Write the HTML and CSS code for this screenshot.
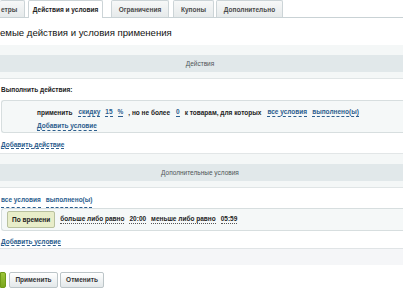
FILE: index.html
```html
<!DOCTYPE html>
<html lang="ru">
<head>
<meta charset="utf-8">
<link rel="stylesheet" href="styles.css">
</head>
<body>
<div class="tabs">
  <div class="tab first">етры</div>
  <div class="tab active">Действия и условия</div>
  <div class="tab">Ограничения</div>
  <div class="tab">Купоны</div>
  <div class="tab">Дополнительно</div>
</div>
<div class="content">
  <div class="title">емые действия и условия применения</div>
  <div class="section-head"><div class="band">Действия</div></div>
  <div class="label">Выполнить действия:</div>
  <div class="box box-actions">
    <div class="row">
      <span class="word">применить</span>
      <span class="lnk">скидку</span>
      <span class="lnk">15</span>
      <span class="lnk">%</span>
      <span class="word">, но не более</span>
      <span class="lnk">0</span>
      <span class="word">к товарам, для которых</span>
      <span class="lnk">все условия</span>
      <span class="lnk">выполнено(ы)</span>
    </div>
    <div class="row"><span class="lnk">Добавить условие</span></div>
  </div>
  <div class="add-action"><span class="lnk">Добавить действие</span></div>
  <div class="section-head second"><div class="band">Дополнительные условия</div></div>
  <div class="cond-top"><span class="lnk">все условия</span><span class="lnk">выполнено(ы)</span></div>
  <div class="box box-cond">
    <span class="tag">По времени</span>
    <span class="dash">больше либо равно</span>
    <span class="dash">20:00</span>
    <span class="dash">меньше либо равно</span>
    <span class="dash">05:59</span>
  </div>
  <div class="add-cond"><span class="lnk">Добавить условие</span></div>
  <div class="footer-band"></div>
  <div class="buttons">
    <span class="btn green"></span>
    <span class="btn">Применить</span>
    <span class="btn">Отменить</span>
  </div>
  <div class="bottom"></div>
</div>
</body>
</html>
```

FILE: styles.css
```css
html, body {
  margin: 0;
  padding: 0;
  background: #fff;
  overflow: hidden;
}
body {
  width: 403px;
  height: 294px;
  font-family: "Liberation Sans", Arial, sans-serif;
  font-size: 6.5px;
  color: #222;
}
.tabs {
  display: flex;
  align-items: flex-end;
  height: 17px;
  border-bottom: 1px solid #c9d2d5;
  background: #fff;
  white-space: nowrap;
}
.tab {
  height: 17px;
  box-sizing: border-box;
  padding: 0 8px;
  margin-right: 4px;
  display: flex;
  align-items: center;
  justify-content: center;
  font-weight: bold;
  color: #4a4a4a;
  background: linear-gradient(#f7f8f8, #e6eaeb);
  border: 1px solid #ccd4d7;
  border-bottom: none;
  border-radius: 2px 2px 0 0;
}
.tab.first {
  padding: 0 0 0 1px;
  justify-content: flex-start;
  border-left: none;
  width: 25px;
  margin-right: 3px;
}
.tab.active {
  background: #fff;
  color: #222;
  width: 75px;
  margin-right: 8px;
  height: 18px;
  margin-bottom: -1px;
}
.tab:nth-child(3) { width: 58px; }
.tab:nth-child(4) { width: 41px; margin-right: 2px; }
.tab:nth-child(5) { width: 67px; }
.title {
  font-size: 9.6px;
  color: #111;
  height: 27px;
  line-height: 30px;
  white-space: nowrap;
}
.section-head {
  background: #f4f7f7;
  padding: 10px 0 6px;
  border-bottom: 1px solid #e0e5e6;
}
.section-head .band {
  background: #e1e8ea;
  height: 17px;
  line-height: 17px;
  text-align: center;
  color: #4f5557;
  padding-right: 3px;
}
.label {
  font-weight: bold;
  padding: 7px 0 0 1px;
  height: 14px;
  line-height: 8px;
  color: #222;
}
.box {
  background: #f5f8f8;
  border: 1px solid #d7dedf;
  border-right: none;
  border-radius: 3px 0 0 3px;
  margin-left: 1px;
  white-space: nowrap;
}
.box-actions {
  height: 33px;
  padding-left: 35px;
  box-sizing: border-box;
}
.row {
  display: flex;
  align-items: center;
  height: 12px;
  margin-top: 5px;
}
.row + .row {
  margin-top: 2px;
}
.word {
  font-weight: bold;
  margin-right: 6px;
}
.lnk {
  font-weight: bold;
  color: #2c5e8e;
  border-bottom: 1px dashed #2c5e8e;
  line-height: 8px;
  margin-right: 5px;
}
.add-action {
  padding: 8px 0 0 1px;
  height: 12px;
}
.section-head.second {
  border-top: 1px solid #e2e6e7;
}
.cond-top {
  padding: 8px 0 0 1px;
  height: 12px;
  display: flex;
}
.box-cond {
  height: 23px;
  box-sizing: border-box;
  display: flex;
  align-items: center;
  padding-left: 5px;
}
.tag {
  background: #e8edc9;
  border: 1px solid #b9c19f;
  border-radius: 2px;
  font-weight: bold;
  padding: 0 4px;
  height: 15px;
  line-height: 15px;
  margin-right: 5px;
}
.dash {
  font-weight: bold;
  border-bottom: 1px dotted #555;
  line-height: 8px;
  margin-right: 5px;
}
.add-cond {
  padding: 7px 0 0 1px;
  height: 10px;
  border-bottom: 1px solid #e0e4e6;
}
.footer-band {
  height: 16px;
  background: #f5f6f8;
}
.buttons {
  display: flex;
  align-items: center;
  padding-top: 7px;
  height: 22px;
  box-sizing: border-box;
}
.btn {
  height: 16px;
  box-sizing: border-box;
  border: 1px solid #bcc5c8;
  border-radius: 2px;
  background: linear-gradient(#fff, #e3e8ea);
  font-weight: bold;
  color: #333;
  padding: 0 8px;
  line-height: 14px;
  margin-right: 2px;
}
.btn.green {
  width: 6px;
  padding: 0;
  border-color: #6f9a16;
  background: linear-gradient(#9cc43a, #7aa61e);
  border-radius: 0 2px 2px 0;
  margin-right: 3px;
}
.btn:nth-child(2) { width: 49px; text-align: center; padding: 0; }
.btn:nth-child(3) { width: 44px; text-align: center; padding: 0; }
.bottom {
  margin-top: 7px;
  height: 3px;
  background: #e8eced;
}
```
